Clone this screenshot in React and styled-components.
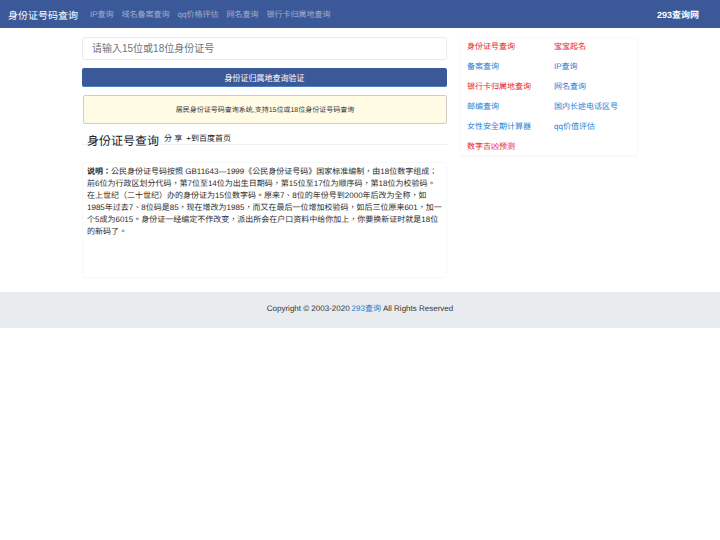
import styled, { createGlobalStyle } from 'styled-components'

const GlobalStyle = createGlobalStyle`
  body {
    margin: 0;
    background: #fff;
    color: #212529;
    font-family: "Liberation Sans", "Noto Sans CJK TC", sans-serif;
    font-size: 8px;
    text-rendering: geometricPrecision;
  }
  a { text-decoration: none; }
`

const Navbar = styled.nav`
  height: 28px;
  background: #3b5998;
  display: flex;
  align-items: center;
  padding: 0 21px 0 8px;
`

const Brand = styled.a`
  color: #fff;
  font-size: 10px;
  margin-right: 12px;
  white-space: nowrap;
`

const NavLinks = styled.div`
  display: flex;
  gap: 8px;
  flex: 1;
`

const NavLink = styled.a`
  color: rgba(255, 255, 255, 0.5);
  font-size: 8px;
  white-space: nowrap;
`

const SiteLink = styled.a`
  color: #fff;
  font-size: 9px;
  font-weight: 700;
`

const Content = styled.div`
  display: flex;
  align-items: flex-start;
  gap: 13px;
  padding: 9px 0 0 82px;
`

const Main = styled.main`
  width: 365px;
  display: flex;
  flex-direction: column;
`

const SearchInput = styled.input`
  box-sizing: border-box;
  width: 100%;
  height: 23px;
  padding: 0 9px;
  border: 1px solid #e8eaec;
  border-radius: 3px;
  font: 10px "Liberation Sans", "Noto Sans CJK TC", sans-serif;
  outline: none;
  &::placeholder { color: #6c757d; opacity: 1; }
`

const SubmitButton = styled.button`
  width: 100%;
  height: 19px;
  margin-top: 8px;
  padding: 0;
  background: #3b5998;
  border: none;
  border-bottom: 1px solid #4a7fc0;
  border-radius: 2px;
  color: #fff;
  font: 8px "Liberation Sans", "Noto Sans CJK TC", sans-serif;
`

const Notice = styled.div`
  box-sizing: border-box;
  height: 29px;
  margin-top: 8px;
  margin-left: 1px;
  background: #fffbe5;
  border: 1px solid #cfcdc4;
  border-radius: 2px;
  display: flex;
  align-items: center;
  justify-content: center;
  font-size: 7px;
  color: #333;
`

const TitleRow = styled.div`
  display: flex;
  align-items: flex-start;
  height: 20px;
  padding-left: 5px;
  border-bottom: 1px solid #eff0f2;
`

const Title = styled.h1`
  margin: 7px 5px 0 0;
  font-size: 12px;
  font-weight: 400;
  line-height: 20px;
  color: #222;
`

const TitleActions = styled.div`
  display: flex;
  gap: 4px;
  margin-top: 9px;
  font-size: 8px;
  line-height: 12px;
  color: #222;
`

const Article = styled.article`
  box-sizing: border-box;
  height: 116px;
  margin-top: 17px;
  padding: 3px 4px;
  border: 1px solid #f7f8f8;
  border-radius: 3px;
  font-size: 8px;
  line-height: 12px;
  color: #2b2b2b;
`

const Side = styled.aside`
  box-sizing: border-box;
  width: 178px;
  height: 119px;
  display: grid;
  grid-template-columns: 87px 1fr;
  grid-auto-rows: 20px;
  padding: 0 6px;
  border: 1px solid #f8f9f9;
  border-radius: 3px;
  box-shadow: 0 1px 2px rgba(0, 0, 0, 0.03);
`

const SideLink = styled.a`
  display: flex;
  align-items: center;
  padding-bottom: 3px;
  font-size: 8px;
  color: ${p => (p.$hot ? '#e8222e' : '#1c7fd6')};
  white-space: nowrap;
`

const Footer = styled.footer`
  box-sizing: border-box;
  height: 36px;
  margin-top: 14px;
  padding-bottom: 4px;
  background: #e9ecef;
  display: flex;
  align-items: center;
  justify-content: center;
  font-size: 8px;
  color: #333;
`

const FooterLink = styled.a`
  color: #1c7fd6;
  margin: 0 2px;
`

const navItems = ['IP查询', '域名备案查询', 'qq价格评估', '网名查询', '银行卡归属地查询']

const sideItems = [
  ['身份证号查询', true],
  ['宝宝起名', true],
  ['备案查询', false],
  ['IP查询', false],
  ['银行卡归属地查询', true],
  ['网名查询', false],
  ['邮编查询', false],
  ['国内长途电话区号', false],
  ['女性安全期计算器', false],
  ['qq价值评估', false],
  ['数字吉凶预测', true],
]

export default function App() {
  return (
    <>
      <GlobalStyle />
      <Navbar>
        <Brand href="#">身份证号码查询</Brand>
        <NavLinks>
          {navItems.map(item => (
            <NavLink key={item} href="#">{item}</NavLink>
          ))}
        </NavLinks>
        <SiteLink href="#">293查询网</SiteLink>
      </Navbar>

      <Content>
        <Main>
          <SearchInput placeholder="请输入15位或18位身份证号" />
          <SubmitButton>身份证归属地查询验证</SubmitButton>
          <Notice>居民身份证号码查询系统,支持15位或18位身份证号码查询</Notice>
          <TitleRow>
            <Title>身份证号查询</Title>
            <TitleActions>
              <span>分 享</span>
              <span>+到百度首页</span>
            </TitleActions>
          </TitleRow>
          <Article>
            <strong>说明：</strong>公民身份证号码按照 GB11643—1999《公民身份证号码》国家标准编制，由18位数字组成：前6位为行政区划分代码，第7位至14位为出生日期码，第15位至17位为顺序码，第18位为校验码。在上世纪（二十世纪）办的身份证为15位数字码。原来7、8位的年份号到2000年后改为全称，如1985年过去7、8位码是85，现在增改为1985，而又在最后一位增加校验码，如后三位原来601，加一个5成为6015。身份证一经编定不作改变，派出所会在户口资料中给你加上，你要换新证时就是18位的新码了。
          </Article>
        </Main>

        <Side>
          {sideItems.map(([label, hot]) => (
            <SideLink key={label} href="#" $hot={hot}>{label}</SideLink>
          ))}
        </Side>
      </Content>

      <Footer>
        Copyright © 2003-2020 <FooterLink href="#">293查询</FooterLink> All Rights Reserved
      </Footer>
    </>
  )
}
